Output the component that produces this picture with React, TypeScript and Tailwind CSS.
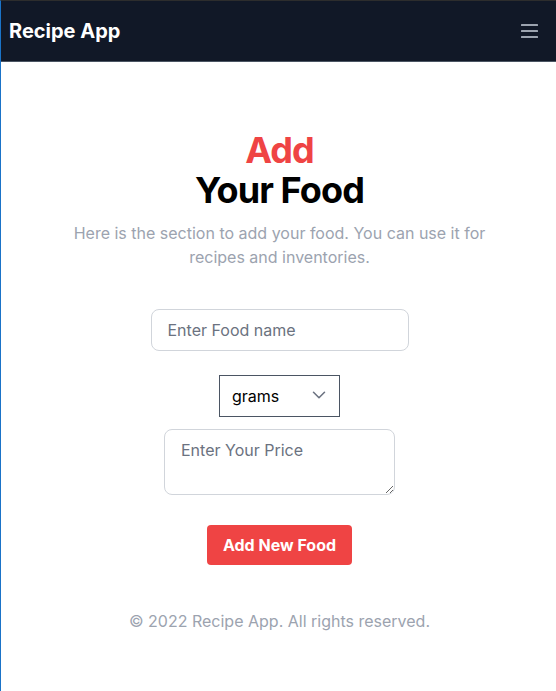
import React from 'react';

function MenuIcon() {
  return (
    <svg width="17" height="14" viewBox="0 0 17 14" fill="#9ca3af">
      <rect x="0" y="0" width="17" height="2" rx="0.5" />
      <rect x="0" y="6" width="17" height="2" rx="0.5" />
      <rect x="0" y="12" width="17" height="2" rx="0.5" />
    </svg>
  );
}

function ChevronDown() {
  return (
    <svg width="22" height="22" viewBox="0 0 20 20" fill="none" stroke="#6b7280" strokeWidth={1.4} strokeLinecap="round" strokeLinejoin="round">
      <path d="M5 7.5l5 5 5-5" />
    </svg>
  );
}

export default function App() {
  return (
    <div className="min-h-[691px] bg-white border-t border-l border-t-[#2d2d2d] border-l-[#1a73c8] flex flex-col font-['Inter',sans-serif]">
      {/* Navbar */}
      <header className="h-[61px] bg-[#111827] border-b border-[#4b5563] flex items-center justify-between pl-2 pr-[18px]">
        <span className="text-xl font-bold text-white">Recipe App</span>
        <button className="flex items-center" aria-label="menu">
          <MenuIcon />
        </button>
      </header>

      {/* Add food section */}
      <main className="flex flex-col items-center pt-[68px] pl-[2px]">
        <h1 className="text-4xl font-bold tracking-tight text-center text-black leading-10">
          <span className="block text-[#ef4444]">Add</span>
          Your Food
        </h1>
        <p className="mt-[11px] max-w-md text-center text-base leading-6 text-[#9ca3af]">
          Here is the section to add your food. You can use it for recipes and inventories.
        </p>

        <input
          type="text"
          placeholder="Enter Food name"
          className="mt-10 w-[258px] h-[42px] px-4 rounded-lg border border-[#d1d5db] text-base placeholder:text-[#6b7280] outline-none"
        />

        <div className="relative mt-6">
          <select className="appearance-none w-[121px] h-[42px] pl-3 pr-8 border border-[#4b5563] bg-white text-base text-black outline-none">
            <option>grams</option>
            <option>kg</option>
            <option>litres</option>
          </select>
          <span className="pointer-events-none absolute right-[10px] top-[9px]">
            <ChevronDown />
          </span>
        </div>

        <textarea
          placeholder="Enter Your Price"
          className="mt-3 w-[231px] h-[66px] px-4 py-2 rounded-lg border border-[#d1d5db] text-base placeholder:text-[#6b7280] outline-none"
        />

        <button className="mt-[30px] h-10 px-4 rounded bg-[#ef4444] text-white font-bold text-base">
          Add New Food
        </button>

        <footer className="mt-11 text-base leading-6 text-[#9ca3af]">
          © 2022 Recipe App. All rights reserved.
        </footer>
      </main>
    </div>
  );
}
